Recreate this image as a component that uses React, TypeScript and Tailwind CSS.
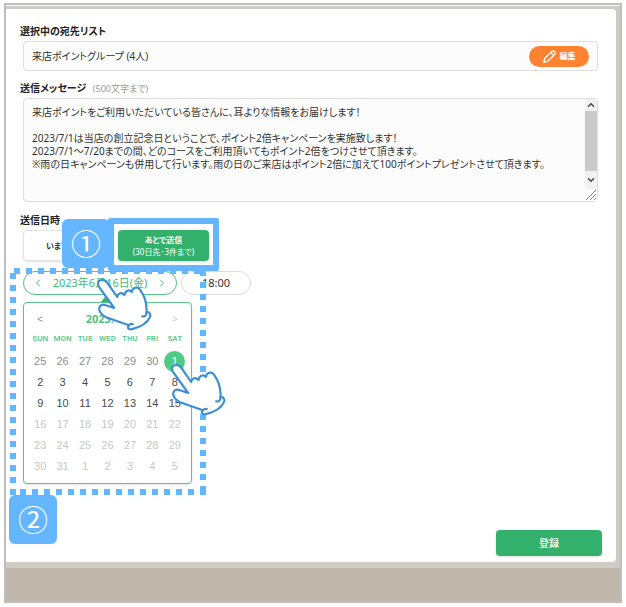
import { useState } from 'react';
import { ChevronDown, ChevronLeft, ChevronRight, ChevronUp } from 'lucide-react';

const WEEKDAYS = ['SUN', 'MON', 'TUE', 'WED', 'THU', 'FRI', 'SAT'];

type Tone = 'prev' | 'open' | 'closed' | 'selected';

interface Day {
  day: number;
  tone: Tone;
}

const toDays = (days: number[], tone: Tone): Day[] => days.map((day) => ({ day, tone }));

const WEEKS: Day[][] = [
  [...toDays([25, 26, 27, 28, 29, 30], 'prev'), { day: 1, tone: 'selected' }],
  toDays([2, 3, 4, 5, 6, 7, 8], 'open'),
  toDays([9, 10, 11, 12, 13, 14, 15], 'open'),
  toDays([16, 17, 18, 19, 20, 21, 22], 'closed'),
  toDays([23, 24, 25, 26, 27, 28, 29], 'closed'),
  toDays([30, 31, 1, 2, 3, 4, 5], 'closed'),
];

const TONE_CLASS: Record<Tone, string> = {
  prev: 'text-[#8c8c8c]',
  open: 'text-[#4a4a4a]',
  closed: 'text-[#c8c8c8]',
  selected: 'bg-[#4fcb86] text-white',
};

const MESSAGE = `来店ポイントをご利用いただいている皆さんに、耳よりな情報をお届けします！

2023/7/1は当店の創立記念日ということで、ポイント2倍キャンペーンを実施致します！
2023/7/1～7/20までの間、どのコースをご利用頂いてもポイント2倍をつけさせて頂きます。
※雨の日キャンペーンも併用して行います。雨の日のご来店はポイント2倍に加えて100ポイントプレゼントさせて頂きます。`;

const PencilIcon = () => (
  <svg viewBox="0 0 36 36" className="size-[13px]" fill="none" stroke="white" strokeWidth="3.5" strokeLinejoin="round">
    <path d="M2 34 5 23 25 3Q28 1 31 4L33 6Q35 9 33 12L13 31Z" />
    <path d="M22 7 29 14" />
  </svg>
);

// 操作箇所を指す手
const PointingHand = () => (
  <svg viewBox="58 70 170 162" className="h-[54px] w-[57px]" stroke="#3b8fd4" strokeWidth="6.5" strokeLinecap="round" strokeLinejoin="round">
    <path
      fill="white"
      d="M66 96C60 84 66 77 73 76C81 74 87 78 92 85L121 127C123 116 133 110 143 121C145 108 157 103 165 112C167 98 182 95 189 104C202 122 211 146 209 173C217 171 222 177 220 186C212 205 190 218 163 224C154 225 151 219 156 212L88 188C74 180 68 172 67 164C67 151 77 147 87 152L112 160Z"
    />
    <path fill="none" d="M209 173C209 182 204 188 196 185M156 212C159 208 163 207 168 208" />
  </svg>
);

const StepBadge = ({ label }: { label: string }) => (
  <div className="flex h-[49px] w-12 items-center justify-center rounded-md bg-[#63b6ff] text-[30px] leading-none text-white">
    {label}
  </div>
);

const Calendar = () => (
  <div className="relative mt-[7px] w-[169px] rounded-sm border border-[#5fc48b] bg-white px-[5px] pt-2 pb-1.5 shadow-sm">
    <span className="absolute -top-1.5 left-[77px] border-x-4 border-b-5 border-x-transparent border-b-[#33b16c]" />
    <div className="flex h-4 items-center justify-between px-2 text-[10px] text-[#888888]">
      <button type="button" aria-label="前の月">&lt;</button>
      <span className="font-['Open_Sans',sans-serif] text-[11px] font-bold text-[#4cc580]">2023. 07</span>
      <button type="button" aria-label="次の月" className="text-[#cccccc]">&gt;</button>
    </div>
    <table className="w-full table-fixed text-center font-['Liberation_Sans',sans-serif]">
      <thead>
        <tr className="h-6 text-[8px] text-[#5ccb8c]">
          {WEEKDAYS.map((weekday) => (
            <th key={weekday} className="p-0 font-[family-name:Roboto,sans-serif] font-semibold">{weekday}</th>
          ))}
        </tr>
      </thead>
      <tbody className="text-[11px]">
        {WEEKS.map((week, index) => (
          <tr key={index}>
            {week.map(({ day, tone }) => (
              <td key={day} className="h-[21px] p-0">
                <button type="button" className={`size-[21px] rounded-full leading-none ${TONE_CLASS[tone]}`}>
                  {day}
                </button>
              </td>
            ))}
          </tr>
        ))}
      </tbody>
    </table>
  </div>
);

const App = () => {
  const [message, setMessage] = useState(MESSAGE);

  return (
    <div className="flex min-h-screen bg-white px-1 pt-[3px] pb-1 font-['Noto_Sans','Noto_Sans_CJK_JP',sans-serif] text-[10px] text-[#333333] [font-feature-settings:'palt']">
      <div className="flex grow flex-col border-2 border-[#bebebe] bg-[#c0b7ad]">
        <div className="flex grow flex-col border-t border-white bg-[#d0ccc5] pt-[3px] pr-1 pb-1.5">
          <form className="flex grow flex-col rounded-r-sm bg-white pt-3 pr-3.5 pb-1.5 pl-3.5" onSubmit={(e) => e.preventDefault()}>
            <h2 className="leading-5 font-bold text-[#222222]">選択中の宛先リスト</h2>
            <div className="mr-1 ml-[3px] flex h-[30px] items-center justify-between rounded-sm border border-[#dedede] bg-[#fcfcfc] pr-2 pl-2">
              <span>来店ポイントグループ (4人)</span>
              <button type="button" className="flex h-[21px] w-[60px] items-center justify-center gap-1 rounded-full bg-[#ff8230] text-[8px] font-bold text-white">
                <PencilIcon />
                編集
              </button>
            </div>

            <label htmlFor="message" className="mt-2 leading-[19px] font-bold text-[#222222]">
              送信メッセージ <span className="ml-1 text-[9px] font-normal text-[#999999]">(500文字まで)</span>
            </label>
            <div className="mr-1 ml-[3px] flex h-[104px] rounded-sm border border-[#dedede] bg-[#fcfcfc]">
              <textarea
                id="message"
                value={message}
                onChange={(e) => setMessage(e.target.value)}
                className="min-w-0 grow resize-none overflow-hidden px-2 py-[7px] leading-[13px] outline-none"
              />
              <div className="flex w-3 shrink-0 flex-col items-center bg-[#f2f2f2]">
                <ChevronUp className="my-px size-2.5 shrink-0 text-[#505050]" strokeWidth={4} />
                <div className="w-full grow bg-[#cacaca]" />
                <ChevronDown className="my-1 size-2.5 shrink-0 text-[#505050]" strokeWidth={4} />
                <svg viewBox="0 0 12 12" className="size-3 shrink-0 bg-[#fcfcfc]" stroke="#888888">
                  <path d="M1 11 11 1M5 11 11 5M9 11 11 9" />
                </svg>
              </div>
            </div>

            <h2 className="mt-2 leading-5 font-bold text-[#222222]">送信日時</h2>
            <div className="ml-[3px] flex gap-1 text-[8px]">
              <button type="button" className="h-[31px] w-[91px] rounded-sm border border-[#e4e4e4] bg-white font-bold shadow-sm">
                いますぐ送信
              </button>
              <div className="relative">
                <button type="button" className="h-[31px] w-[91px] rounded-sm bg-[#33b16c] text-white shadow-sm">
                  <span className="block leading-3 font-bold">あとで送信</span>
                  <span className="block leading-3">(30日先･3件まで)</span>
                </button>
                <div className="absolute -inset-x-2.5 -top-3 -bottom-2.5 z-20 rounded-xs border-6 border-[#63b6ff]" />
                <div className="absolute right-full -top-[11px] z-20 mr-2">
                  <StepBadge label="①" />
                </div>
              </div>
            </div>

            <div className="relative mt-2.5 ml-[3px] w-[169px]">
              <div className="flex h-6 w-max gap-1 text-[11px]">
                <div className="flex w-[154px] items-center justify-between rounded-full border border-[#58c288] px-2 text-[#45ba7a]">
                  <button type="button" aria-label="前の日"><ChevronLeft className="size-3" /></button>
                  <span>2023年6月16日(金)</span>
                  <button type="button" aria-label="次の日"><ChevronRight className="size-3" /></button>
                </div>
                <button type="button" className="w-[70px] rounded-full border border-[#dcdcdc] bg-white">18:00</button>
              </div>
              <Calendar />
              <svg className="pointer-events-none absolute -top-[3px] -left-[13px] z-10 h-[227px] w-[196px]" stroke="#63b6ff" strokeWidth="6" strokeDasharray="6 6">
                <path d="M4 3H196M10 224H196M3 5V227M193 2V227" />
              </svg>
              <div className="pointer-events-none absolute top-[7px] left-[73px] z-30">
                <PointingHand />
              </div>
              <div className="pointer-events-none absolute top-[92px] left-[147px] z-30">
                <PointingHand />
              </div>
              <div className="absolute top-56 -left-3.5 z-20">
                <StepBadge label="②" />
              </div>
            </div>

            <button type="submit" className="mt-auto h-[26px] w-[106px] self-end rounded-sm bg-[#33b16c] font-medium text-white shadow-sm">
              登録
            </button>
          </form>
        </div>
        <footer className="h-[33px]" />
      </div>
    </div>
  );
};

export default App;
